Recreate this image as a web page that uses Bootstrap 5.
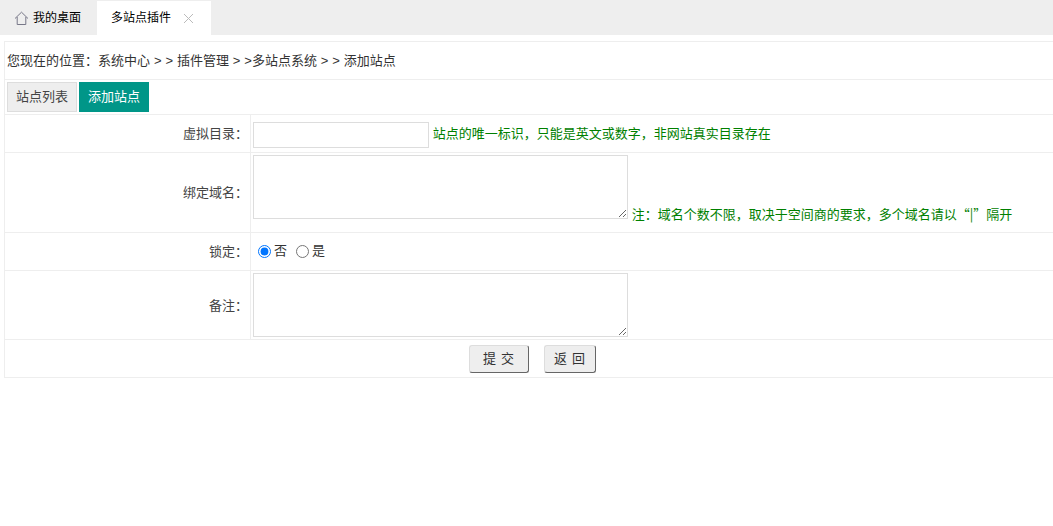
<!DOCTYPE html>
<html lang="zh-CN">
<head>
<meta charset="utf-8">
<title>添加站点</title>
<link href="https://cdn.jsdelivr.net/npm/bootstrap@5.3.0/dist/css/bootstrap.min.css" rel="stylesheet">
<style>
html,body{height:100%;background:#fff}
body{font-family:"Liberation Sans","Noto Sans CJK SC",sans-serif;font-size:13px;color:#333;line-height:1.4;overflow:hidden}
.tabbar{height:35px;background:#eee;padding-top:1px}
.tabitem{height:34px;font-size:12px;color:#000;padding:0 14px;gap:4px;white-space:nowrap;flex:none}
.tabitem.home{width:97px}
.tabitem.on{width:114px;background:#fff;gap:0}
.tabclose{margin-left:12px;display:block}
.pagebox{margin:6px 0 0 4px}
.crumb{height:39px;border:1px solid #eee;border-right:0;padding:2px 0 0 2px;color:#333;word-spacing:.3px}
.subtabs{height:34px;border-left:1px solid #eee;padding:2px 1px 0 2px;gap:2px}
.subbtn{height:30px;width:70px;background:#eee;border:1px solid #ddd;color:#444;line-height:28px;text-align:center}
.subbtn.on{background:#009688;border-color:#009688;color:#fff}
.formgrid{width:calc(100% + 4px);border-collapse:collapse;table-layout:fixed}
.formgrid td{border:1px solid #eee;padding:2px;vertical-align:middle}
.formgrid td.lab{width:246px;text-align:right;padding:4px 2px 2px 2px;color:#444}
.formgrid td.upper{vertical-align:top}
.r1{height:38px}.r2{height:80px}.r3{height:38px}.r4{height:69px}.r5{height:38px}
.inp{width:176px;height:26px;border:1px solid #ddd;vertical-align:middle;background:#fff;outline:0;margin-top:2px}
.area{width:375px;height:64px;border:1px solid #ddd;background:#fff;display:inline-block;margin:0;outline:0}
.area.solo{display:block}
.hint{color:#008000;font-family:"Noto Sans CJK SC",sans-serif}
.hint.low{vertical-align:-1px}
.radio-row{padding-left:5px;gap:0;margin-top:-1px}
.radio-row input{width:13px;height:13px;margin:0 3px 0 0}
.radio-row label{margin-right:9px}
.formgrid td.actcell{padding-left:5px}
.act{height:28px;background:#eee;border:1px solid #ddd;border-bottom-color:#666;border-right-color:#666;border-radius:3px;color:#333;font-size:13px;padding:2px 0 0;width:60px;word-spacing:1.5px;vertical-align:1px}
.act.b2{width:52px;margin-left:15px}
</style>
</head>
<body>
<div class="tabbar d-flex">
  <div class="tabitem home d-flex align-items-center">
    <svg width="15" height="15" viewBox="0 0 15 15" fill="none" stroke="#778" stroke-width="1"><path d="M1 7.5 7.5 1.2 14 7.5M3.2 6v7.5h8.6V6"/></svg>
    <span>我的桌面</span>
  </div>
  <div class="tabitem on d-flex align-items-center">
    <span>多站点插件</span>
    <svg class="tabclose" width="11" height="11" viewBox="0 0 11 11" stroke="#bbb" stroke-width="1"><path d="M1 1l9 9M10 1l-9 9"/></svg>
  </div>
</div>
<div class="pagebox">
  <div class="crumb d-flex align-items-center"><span>您现在的位置&#xFF1A;系统中心 &gt; &gt; 插件管理 &gt; &gt;多站点系统 &gt; &gt; 添加站点</span></div>
  <div class="subtabs d-flex">
    <div class="subbtn">站点列表</div>
    <div class="subbtn on">添加站点</div>
  </div>
  <table class="formgrid">
    <tr class="r1"><td class="lab">虚拟目录&#xFF1A;</td><td><input class="inp" type="text"> <span class="hint low">站点的唯一标识&#xFF0C;只能是英文或数字&#xFF0C;非网站真实目录存在</span></td></tr>
    <tr class="r2"><td class="lab">绑定域名&#xFF1A;</td><td class="upper"><textarea class="area"></textarea> <span class="hint">注&#xFF1A;域名个数不限&#xFF0C;取决于空间商的要求&#xFF0C;多个域名请以&#x201C;|&#x201D;隔开</span></td></tr>
    <tr class="r3"><td class="lab">锁定&#xFF1A;</td><td><div class="radio-row d-flex align-items-center"><input type="radio" name="lock" id="l0" checked><label for="l0">否</label><input type="radio" name="lock" id="l1"><label for="l1">是</label></div></td></tr>
    <tr class="r4"><td class="lab">备注&#xFF1A;</td><td class="upper"><textarea class="area solo"></textarea></td></tr>
    <tr class="r5"><td colspan="2" class="text-center actcell"><button class="act" type="button">提 交</button><button class="act b2" type="button">返 回</button></td></tr>
  </table>
</div>
</body>
</html>
